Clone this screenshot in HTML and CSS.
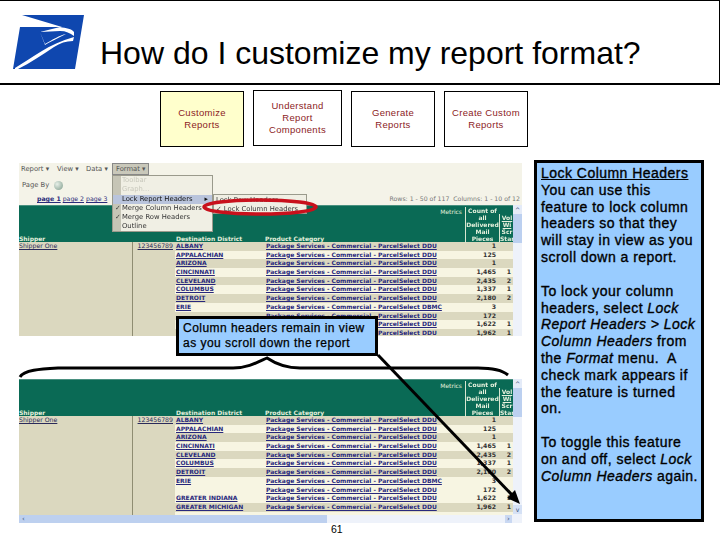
FILE: index.html
```html
<!DOCTYPE html>
<html lang="en">
<head>
    <meta charset="UTF-8">
    <title>How do I customize my report format?</title>
    <link rel="stylesheet" href="styles.css">
</head>
<body>
<div class="slide">
    <div class="header">
        <svg class="logo" width="72" height="55" viewBox="13 15 72 55">
            <polygon fill="#0f47af" points="22,15 84,15 75,69 13,69 20,27 62,27"/>
            <path fill="#fff" d="M60,27 C66,28 72,29 74,32 L74,36 C70,33 66,31 60,31 L40,32 L45,44 C52,40 60,35 66,34 C58,38 50,42 45,45 L40,32 Z"/>
            <path fill="#fff" d="M15,68 C32,58 48,44 74,37 L73,41 C66,41 60,43 54,47 C42,55 30,63 18,69 L15,69 Z"/>
        </svg>
        <h1 class="title">How do I customize my report format?</h1>
    </div>

    <div class="tabs">
        <div class="tab tab-active">Customize<br>Reports</div>
        <div class="tab tab-wide">Understand<br>Report<br>Components</div>
        <div class="tab">Generate<br>Reports</div>
        <div class="tab">Create Custom<br>Reports</div>
    </div>

    <div class="content">
        <div class="reports">
            <div class="report report-top">
                <div class="toolbar">
                    <div class="menubar"><span class="mb-report">Report ▾</span><span class="mb-view">View ▾</span><span class="mb-data">Data ▾</span><span class="format-btn">Format ▾</span></div>
                    <div class="pageby">Page By <span class="globe"></span></div>
                    <div class="pager"><span><b><u>page 1</u></b> <u>page 2</u> <u>page 3</u></span><span class="rowcount">Rows: 1 - 50 of 117 &nbsp;Columns: 1 - 10 of 12</span></div>
                </div>
                <div class="table">
                    <div class="head">
                        <span class="h-shipper">Shipper</span>
                        <span class="h-dest">Destination District</span>
                        <span class="h-prod">Product Category</span>
                        <span class="h-metrics">Metrics</span>
                        <span class="h-count">Count of<br>all<br>Delivered<br>Mail<br>Pieces</span>
                        <span class="h-vol"><u>Vol<br>Wi</u><br>Scr<br>Star</span>
                    </div>
                    <div class="row dark"><span class="ship">Shipper One</span><span class="acct">123456789</span><span class="dist">ALBANY</span><span class="prod">Package Services - Commercial - ParcelSelect DDU</span><span class="num">1</span><span class="num"></span></div>
                    <div class="row"><span class="ship"></span><span class="acct"></span><span class="dist">APPALACHIAN</span><span class="prod">Package Services - Commercial - ParcelSelect DDU</span><span class="num">125</span><span class="num"></span></div>
                    <div class="row dark"><span class="ship"></span><span class="acct"></span><span class="dist">ARIZONA</span><span class="prod">Package Services - Commercial - ParcelSelect DDU</span><span class="num">1</span><span class="num"></span></div>
                    <div class="row"><span class="ship"></span><span class="acct"></span><span class="dist">CINCINNATI</span><span class="prod">Package Services - Commercial - ParcelSelect DDU</span><span class="num">1,465</span><span class="num">1</span></div>
                    <div class="row dark"><span class="ship"></span><span class="acct"></span><span class="dist">CLEVELAND</span><span class="prod">Package Services - Commercial - ParcelSelect DDU</span><span class="num">2,435</span><span class="num">2</span></div>
                    <div class="row"><span class="ship"></span><span class="acct"></span><span class="dist">COLUMBUS</span><span class="prod">Package Services - Commercial - ParcelSelect DDU</span><span class="num">1,337</span><span class="num">1</span></div>
                    <div class="row dark"><span class="ship"></span><span class="acct"></span><span class="dist">DETROIT</span><span class="prod">Package Services - Commercial - ParcelSelect DDU</span><span class="num">2,180</span><span class="num">2</span></div>
                    <div class="row"><span class="ship"></span><span class="acct"></span><span class="dist">ERIE</span><span class="prod">Package Services - Commercial - ParcelSelect DBMC</span><span class="num">3</span><span class="num"></span></div>
                    <div class="row dark"><span class="ship"></span><span class="acct"></span><span class="dist"></span><span class="prod">Package Services - Commercial - ParcelSelect DDU</span><span class="num">172</span><span class="num"></span></div>
                    <div class="row"><span class="ship"></span><span class="acct"></span><span class="dist">GREATER INDIANA</span><span class="prod">Package Services - Commercial - ParcelSelect DDU</span><span class="num">1,622</span><span class="num">1</span></div>
                    <div class="row dark"><span class="ship"></span><span class="acct"></span><span class="dist">GREATER MICHIGAN</span><span class="prod">Package Services - Commercial - ParcelSelect DDU</span><span class="num">1,962</span><span class="num">1</span></div>
                    <div class="vscroll"></div>
                </div>
                <div class="menu">
                    <div class="menu-item faded">Toolbar</div>
                    <div class="menu-item faded">Graph...</div>
                    <div class="menu-item menu-on">Lock Report Headers <i>▸</i></div>
                    <div class="menu-item"><b>✓</b>Merge Column Headers</div>
                    <div class="menu-item"><b>✓</b>Merge Row Headers</div>
                    <div class="menu-item">Outline</div>
                </div>
                <div class="submenu">
                    <div class="menu-item">Lock Row Headers</div>
                    <div class="menu-item">✓ Lock Column Headers</div>
                </div>
            </div>

            <div class="report report-bottom">
                <div class="table">
                    <div class="head">
                        <span class="h-shipper">Shipper</span>
                        <span class="h-dest">Destination District</span>
                        <span class="h-prod">Product Category</span>
                        <span class="h-metrics">Metrics</span>
                        <span class="h-count">Count of<br>all<br>Delivered<br>Mail<br>Pieces</span>
                        <span class="h-vol"><u>Vol<br>Wi</u><br>Scr<br>Star</span>
                    </div>
                    <div class="row dark"><span class="ship">Shipper One</span><span class="acct">123456789</span><span class="dist">ALBANY</span><span class="prod">Package Services - Commercial - ParcelSelect DDU</span><span class="num">1</span><span class="num"></span></div>
                    <div class="row"><span class="ship"></span><span class="acct"></span><span class="dist">APPALACHIAN</span><span class="prod">Package Services - Commercial - ParcelSelect DDU</span><span class="num">125</span><span class="num"></span></div>
                    <div class="row dark"><span class="ship"></span><span class="acct"></span><span class="dist">ARIZONA</span><span class="prod">Package Services - Commercial - ParcelSelect DDU</span><span class="num">1</span><span class="num"></span></div>
                    <div class="row"><span class="ship"></span><span class="acct"></span><span class="dist">CINCINNATI</span><span class="prod">Package Services - Commercial - ParcelSelect DDU</span><span class="num">1,465</span><span class="num">1</span></div>
                    <div class="row dark"><span class="ship"></span><span class="acct"></span><span class="dist">CLEVELAND</span><span class="prod">Package Services - Commercial - ParcelSelect DDU</span><span class="num">2,435</span><span class="num">2</span></div>
                    <div class="row"><span class="ship"></span><span class="acct"></span><span class="dist">COLUMBUS</span><span class="prod">Package Services - Commercial - ParcelSelect DDU</span><span class="num">1,337</span><span class="num">1</span></div>
                    <div class="row dark"><span class="ship"></span><span class="acct"></span><span class="dist">DETROIT</span><span class="prod">Package Services - Commercial - ParcelSelect DDU</span><span class="num">2,180</span><span class="num">2</span></div>
                    <div class="row"><span class="ship"></span><span class="acct"></span><span class="dist">ERIE</span><span class="prod">Package Services - Commercial - ParcelSelect DBMC</span><span class="num">3</span><span class="num"></span></div>
                    <div class="row"><span class="ship"></span><span class="acct"></span><span class="dist"></span><span class="prod">Package Services - Commercial - ParcelSelect DDU</span><span class="num">172</span><span class="num"></span></div>
                    <div class="row"><span class="ship"></span><span class="acct"></span><span class="dist">GREATER INDIANA</span><span class="prod">Package Services - Commercial - ParcelSelect DDU</span><span class="num">1,622</span><span class="num">1</span></div>
                    <div class="row dark"><span class="ship"></span><span class="acct"></span><span class="dist">GREATER MICHIGAN</span><span class="prod">Package Services - Commercial - ParcelSelect DDU</span><span class="num">1,962</span><span class="num">1</span></div>
                    <div class="row row-cut"><span class="ship"></span><span class="acct"></span><span class="dist"></span><span class="prod"></span><span class="num"></span><span class="num"></span></div>
                    <div class="vscroll vscroll-bottom"></div>
                </div>
                <div class="hscroll"><span class="hthumb">‹</span><span class="hright">›</span></div>
            </div>
            <div class="page-num">61</div>
        </div>

        <div class="help">
            <p><u>Lock Column Headers</u><br>You can use this feature to lock column headers so that they will stay in view as you scroll down a report.</p>
            <p>To lock your column headers, select <em>Lock Report Headers &gt; Lock Column Headers</em> from the <em>Format</em> menu.&nbsp; A check mark appears if the feature is turned<br>on.</p>
            <p>To toggle this feature on and off, select <em>Lock Column Headers</em> again.</p>
        </div>
    </div>

    <svg class="marks" width="720" height="540" viewBox="0 0 720 540">
        <ellipse cx="260" cy="207" rx="56" ry="7" fill="none" stroke="#c8101c" stroke-width="3.5"/>
        <path d="M20,377 C24,370 40,369 58,368 L233,368 C248,368 258,362 267,358 C276,364 286,368 300,368 L478,368 C492,368 502,370 508,375" fill="none" stroke="#000" stroke-width="3"/>
        <line x1="378" y1="355" x2="514" y2="497" stroke="#000" stroke-width="3"/>
        <polygon points="520,504 507,498 515,490" fill="#000"/>
    </svg>

    <div class="callout">Column headers remain in view as you scroll down the report</div>
</div>
</body>
</html>
```

FILE: styles.css
```css
html, body {
    margin: 0;
    padding: 0;
    background: #fff;
}
.slide {
    position: relative;
    width: 720px;
    height: 540px;
    overflow: hidden;
    font-family: "Liberation Sans", Arial, sans-serif;
}
.header {
    box-sizing: border-box;
    height: 85px;
    display: flex;
    border-top: 1px solid #000;
    border-right: 1px solid #000;
    border-bottom: 2px solid #000;
}
.logo {
    margin: 14px 0 0 13px;
}
.title {
    margin: 0 0 0 15px;
    padding-top: 34px;
    font-size: 32px;
    line-height: 36px;
    font-weight: normal;
    color: #000;
    white-space: nowrap;
}
.tabs {
    display: flex;
    gap: 9px;
    padding: 6px 0 0 160px;
    height: 56px;
}
.tab {
    box-sizing: border-box;
    width: 84px;
    height: 56px;
    display: flex;
    align-items: center;
    justify-content: center;
    text-align: center;
    border: 1px solid #000;
    font-size: 9.5px;
    line-height: 12px;
    letter-spacing: 0.3px;
    color: #8c1c24;
}
.tab-active {
    background: #ffffcc;
}
.tab-wide {
    width: 89px;
    margin-top: -1px;
}
.content {
    display: flex;
    gap: 12px;
    padding: 14px 0 0 19px;
}
.reports {
    width: 503px;
}
.report {
    position: relative;
    font-size: 6.2px;
    filter: blur(0.3px);
    font-family: "DejaVu Sans", sans-serif;
    color: #222;
}
.report-top {
    height: 173px;
    margin-top: 2px;
    overflow: hidden;
}
.report-bottom {
    height: 144px;
    margin-top: 43px;
    overflow: hidden;
}
.toolbar {
    height: 42px;
    background: #f4f3e8;
    color: #555;
}
.menubar {
    display: flex;
    height: 12px;
    line-height: 12px;
    font-size: 6.8px;
}
.mb-report {
    margin-left: 2px;
    width: 36px;
}
.mb-view {
    width: 29px;
}
.mb-data {
    width: 26px;
}
.format-btn {
    width: 37px;
    padding-left: 3px;
    box-sizing: border-box;
    background: #c9c8ba;
    border: 1px solid #888;
    line-height: 10px;
}
.pageby {
    display: flex;
    align-items: center;
    gap: 5px;
    height: 18px;
    padding: 2px 0 0 3px;
    box-sizing: border-box;
    font-size: 6.8px;
}
.globe {
    width: 9px;
    height: 9px;
    border-radius: 50%;
    background: radial-gradient(circle at 35% 35%, #e8f0e8, #7d9a8a);
}
.pager {
    display: flex;
    justify-content: space-between;
    line-height: 12px;
    color: #2a2a7a;
    padding: 0 2px 0 18px;
}
.rowcount {
    color: #777;
}
.table {
    position: relative;
}
.head {
    position: relative;
    height: 37px;
    background: #0a6a55;
    color: #e4f0dc;
    font-weight: bold;
    font-size: 6px;
    border-top: 1px solid #4a9080;
    box-sizing: border-box;
}
.head span {
    position: absolute;
    white-space: nowrap;
}
.h-shipper {
    left: 0;
    bottom: 0;
}
.h-dest {
    left: 157px;
    bottom: 0;
}
.h-prod {
    left: 246px;
    bottom: 0;
}
.h-metrics {
    right: 60px;
    top: 2px;
    font-weight: normal;
}
.h-count {
    left: 446px;
    width: 33px;
    top: 1px;
    text-align: center;
    line-height: 7px;
    border-left: 1px solid #d8e6d0;
    height: 36px;
}
.h-vol {
    left: 480px;
    width: 14px;
    bottom: 0;
    overflow: hidden;
    text-align: center;
    line-height: 7px;
    border-left: 1px solid #d8e6d0;
}
.row {
    display: grid;
    grid-template-columns: 113px 43px 90px 200px 33px 15px;
    height: 8.7px;
    line-height: 8.7px;
    width: 494px;
    background: #f7f5e2;
    overflow: hidden;
    white-space: nowrap;
}
.row.dark {
    background: #dbd8bf;
}
.row.row-cut {
    height: 3.5px;
}
.row span {
    overflow: hidden;
}
.ship, .acct {
    background: #dbd8bf;
    color: #2a2a5a;
    text-decoration: underline;
}
.acct {
    border-left: 1px solid #8f8d72;
    text-align: right;
    padding-right: 2px;
    box-sizing: border-box;
}
.dist, .prod {
    color: #28287c;
    font-weight: bold;
    text-decoration: underline;
    padding-left: 1px;
    font-size: 6px;
}
.num {
    text-align: right;
    font-weight: bold;
    padding-right: 2px;
    color: #333;
}
.vscroll {
    position: absolute;
    top: 0;
    right: 0;
    bottom: 0;
    width: 9px;
    color: #3a4f7a;
    text-align: center;
    line-height: 9px;
    background: linear-gradient(#e4ebf8 0, #e4ebf8 9px, #bcd0f0 9px, #bcd0f0 38px, #eef2fa 38px);
}
.vscroll::before {
    content: "^";
}
.vscroll-bottom::after {
    content: "v";
    position: absolute;
    left: 0;
    right: 0;
    bottom: 1px;
    height: 9px;
    background: #d5e1f5;
}
.hscroll {
    position: absolute;
    left: 0;
    right: 0;
    bottom: 0;
    height: 8px;
    line-height: 8px;
    font-size: 7px;
    color: #3a4f7a;
    background: #eef2fa;
}
.hthumb {
    display: block;
    width: 308px;
    height: 100%;
    padding-left: 3px;
    box-sizing: border-box;
    background: #bdd0ef;
}
.hright {
    position: absolute;
    right: 10px;
    top: 0;
    width: 7px;
    text-align: center;
    background: #c9d8f2;
}
.menu {
    position: absolute;
    left: 93px;
    top: 12px;
    width: 101px;
    height: 57px;
    background: linear-gradient(90deg, #c6c5b6 8px, #f0efe4 8px);
    border: 1px solid #9a9a8c;
    box-sizing: border-box;
    font-size: 6.8px;
    color: #333;
}
.menu-item {
    position: relative;
    height: 9.3px;
    line-height: 9.3px;
    padding-left: 9px;
    white-space: nowrap;
}
.menu-item b {
    position: absolute;
    left: 2px;
    font-weight: normal;
}
.menu-item i {
    position: absolute;
    right: 4px;
    font-style: normal;
}
.faded {
    color: #c8c8bc;
}
.menu-on {
    background: #b9c4dc;
    color: #111;
}
.submenu {
    position: absolute;
    left: 194px;
    top: 31px;
    width: 94px;
    height: 20px;
    padding-top: 1px;
    box-sizing: border-box;
    background: #f0efe4;
    border: 1px solid #9a9a8c;
    font-size: 6.8px;
    color: #333;
}
.submenu .menu-item {
    padding-left: 2px;
}
.page-num {
    margin: 0 0 0 312px;
    font-family: "Liberation Sans", Arial, sans-serif;
    font-size: 10.5px;
    line-height: 12px;
}
.help {
    box-sizing: border-box;
    width: 170px;
    height: 362px;
    margin-top: -1px;
    padding: 2px 0 0 4px;
    background: #99ccff;
    border: 3px solid #000;
    font-size: 14px;
    line-height: 16.8px;
    letter-spacing: 0.47px;
    -webkit-text-stroke: 0.35px #000;
    color: #000;
}
.help p {
    margin: 0 0 17px;
}
.marks {
    position: absolute;
    left: 0;
    top: 0;
}
.callout {
    position: absolute;
    left: 176px;
    top: 316px;
    width: 202px;
    height: 40px;
    box-sizing: border-box;
    padding: 2px 4px;
    background: #99ccff;
    border: 3px solid #000;
    font-size: 12px;
    line-height: 15px;
    letter-spacing: 0.47px;
    -webkit-text-stroke: 0.25px #000;
}
```
